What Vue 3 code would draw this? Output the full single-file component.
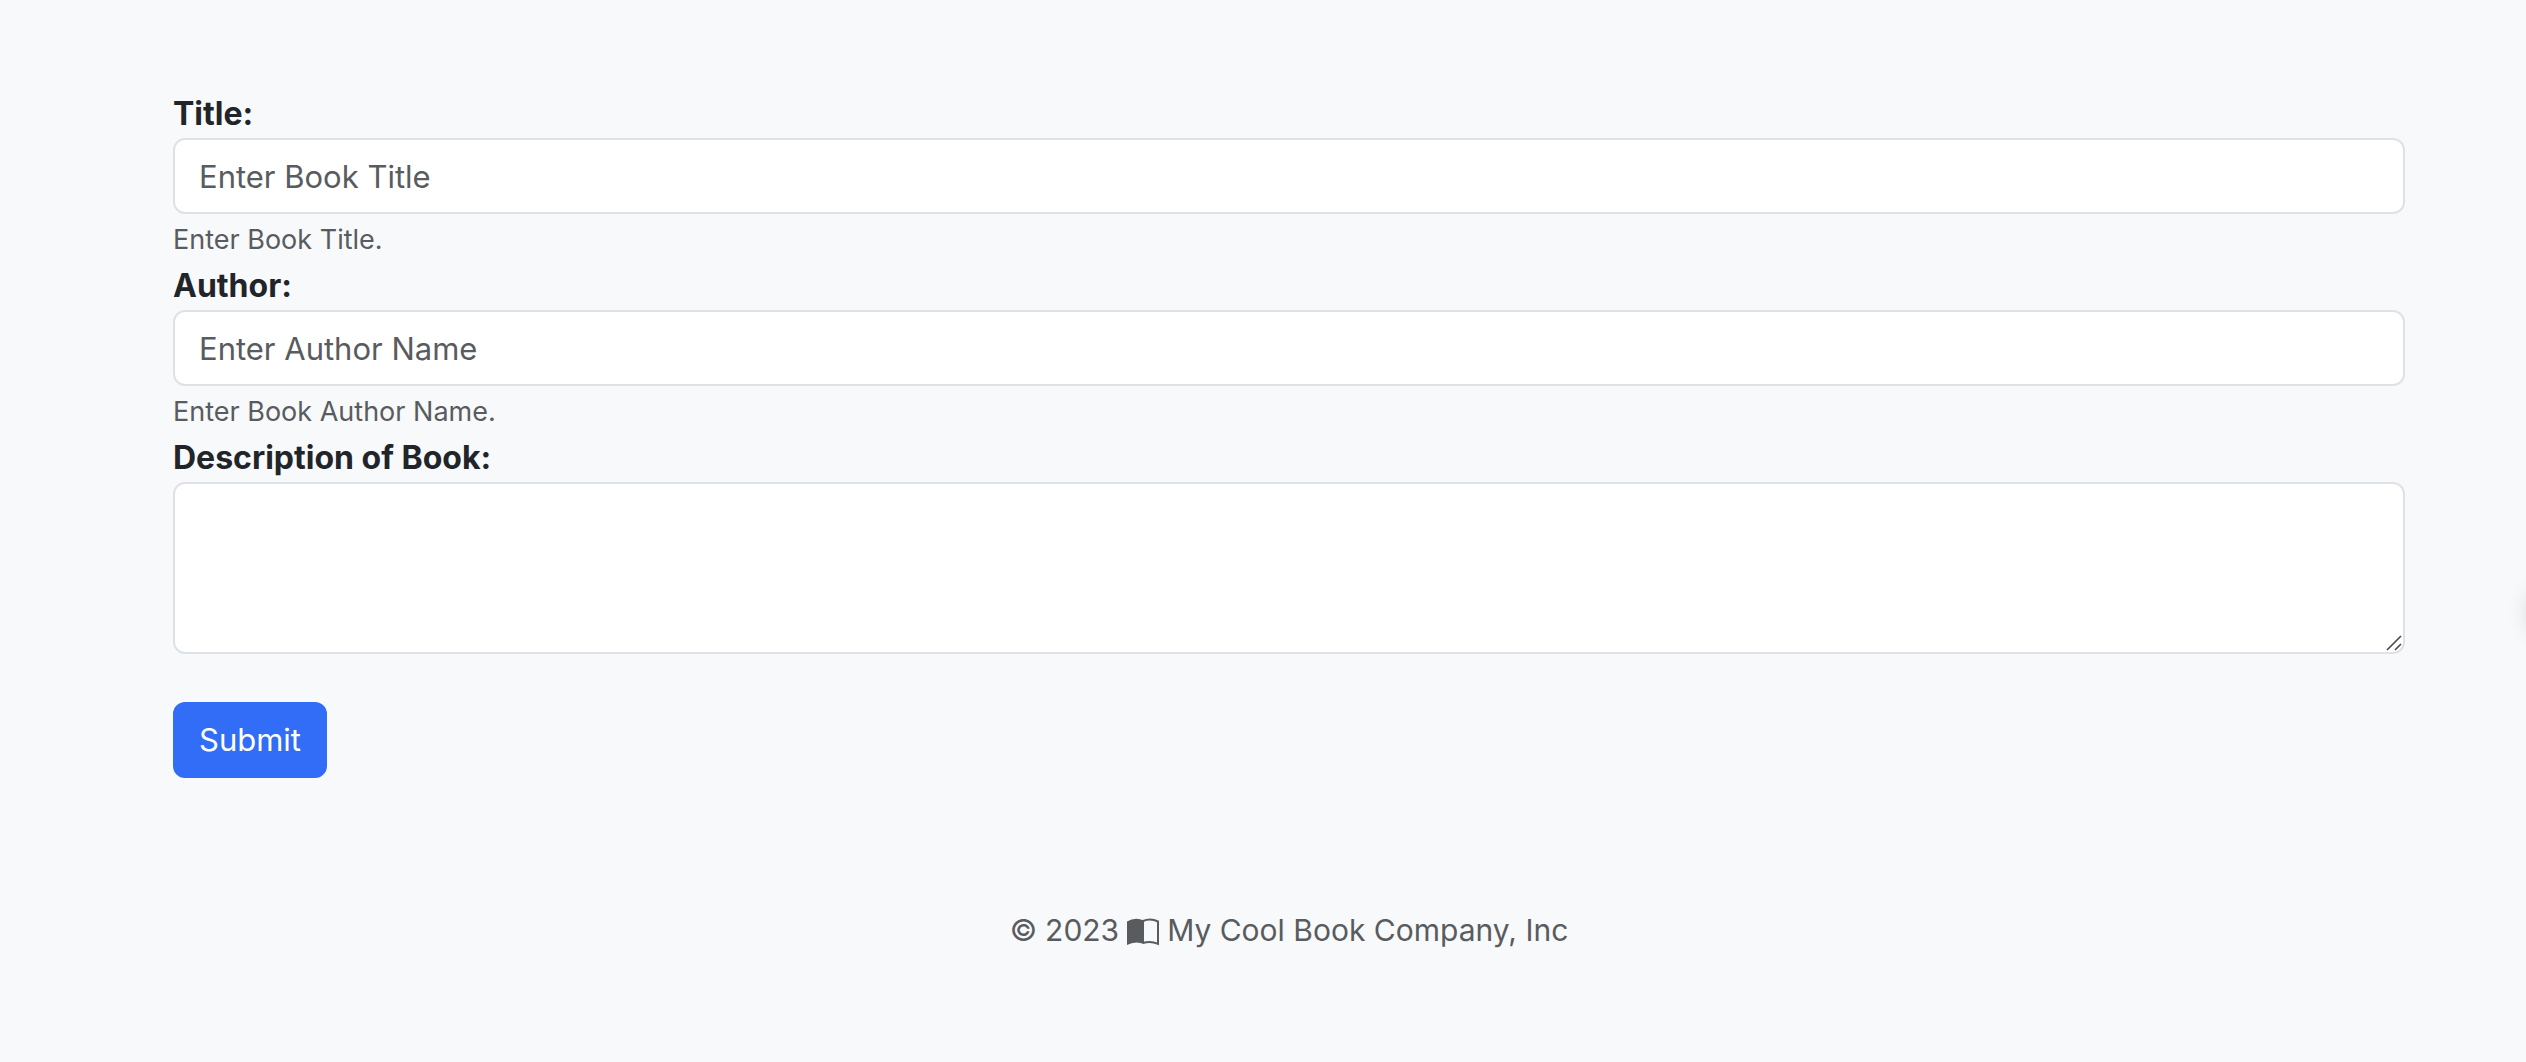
<script setup>
import { ref } from 'vue'

const title = ref('')
const author = ref('')
const description = ref('')
</script>

<template>
  <div class="page">
    <main>
      <form @submit.prevent>
        <div class="group">
          <label for="title">Title:</label>
          <input id="title" v-model="title" type="text" placeholder="Enter Book Title" aria-describedby="title-help">
          <small id="title-help">Enter Book Title.</small>
        </div>
        <div class="group">
          <label for="author">Author:</label>
          <input id="author" v-model="author" type="text" placeholder="Enter Author Name" aria-describedby="author-help">
          <small id="author-help">Enter Book Author Name.</small>
        </div>
        <div class="group">
          <label for="description">Description of Book:</label>
          <textarea id="description" v-model="description" rows="3"></textarea>
          <svg class="grip" viewBox="0 0 16 16" aria-hidden="true">
            <path d="M1 15L15 1M9 15L15 9" />
          </svg>
        </div>
        <button type="submit">Submit</button>
      </form>
    </main>
    <footer>
      <span>©</span>
      <span class="year">2023</span>
      <svg class="book" viewBox="0 0 32 28" aria-hidden="true">
        <path d="M0 3.500Q8-1.500 17 2.500V26Q8 22.500 0 27Z" fill="currentColor" />
        <path d="M16 3Q23.500-.4 31 3.500V25.800Q23.500 22.500 16 25" fill="none" stroke="currentColor" stroke-width="2" />
      </svg>
      <span>My Cool Book Company, Inc</span>
    </footer>
    <div class="edge" aria-hidden="true"></div>
  </div>
</template>

<style>
body {
  margin: 0;
  background: #f8f9fb;
}
</style>

<style scoped>
.page {
  position: relative;
  box-sizing: border-box;
  min-height: 100vh;
  overflow: hidden;
  padding: 90px 121px 60px 173px;
  background: #f8f9fb;
  color: #212529;
  font-family: Inter, "Liberation Sans", sans-serif;
  font-size: 31px;
  line-height: 48px;
}

form {
  display: flex;
  flex-direction: column;
  align-items: flex-start;
}

.group {
  position: relative;
  display: flex;
  flex-direction: column;
  width: 100%;
}

label {
  font-size: 32px;
  font-weight: 700;
}

input,
textarea {
  box-sizing: border-box;
  display: block;
  width: 100%;
  margin: 0;
  padding: 12px 24px;
  border: 2px solid #dee2e6;
  border-radius: 12px;
  background: #fff;
  color: #212529;
  font: inherit;
}

input {
  height: 76px;
}

textarea {
  resize: vertical;
}

textarea::-webkit-resizer {
  background: transparent;
}

.grip {
  position: absolute;
  right: 3px;
  bottom: 3px;
  width: 16px;
  height: 16px;
  fill: none;
  stroke: #4a4a4a;
  stroke-width: 1.6;
  pointer-events: none;
}

input::placeholder {
  color: #595c5f;
  opacity: 1;
}

small {
  padding-top: 4px;
  color: #595c5f;
  font-size: 27px;
  line-height: 44px;
}

button {
  margin-top: 48px;
  padding: 12px 24px;
  border: 2px solid #316df6;
  border-radius: 12px;
  background: #316df6;
  color: #fff;
  font: inherit;
}

footer {
  display: flex;
  align-items: center;
  justify-content: center;
  margin-top: 128px;
  color: #595c5f;
  font-size: 30px;
}

.year {
  margin: 0 8px;
}

.book {
  width: 32px;
  height: 28px;
  margin: 4px 8px 0 0;
}

.edge {
  position: absolute;
  top: 588px;
  right: -52px;
  width: 48px;
  height: 48px;
  border-radius: 50%;
  box-shadow: 0 0 24px rgba(0, 0, 0, 0.18);
}
</style>
